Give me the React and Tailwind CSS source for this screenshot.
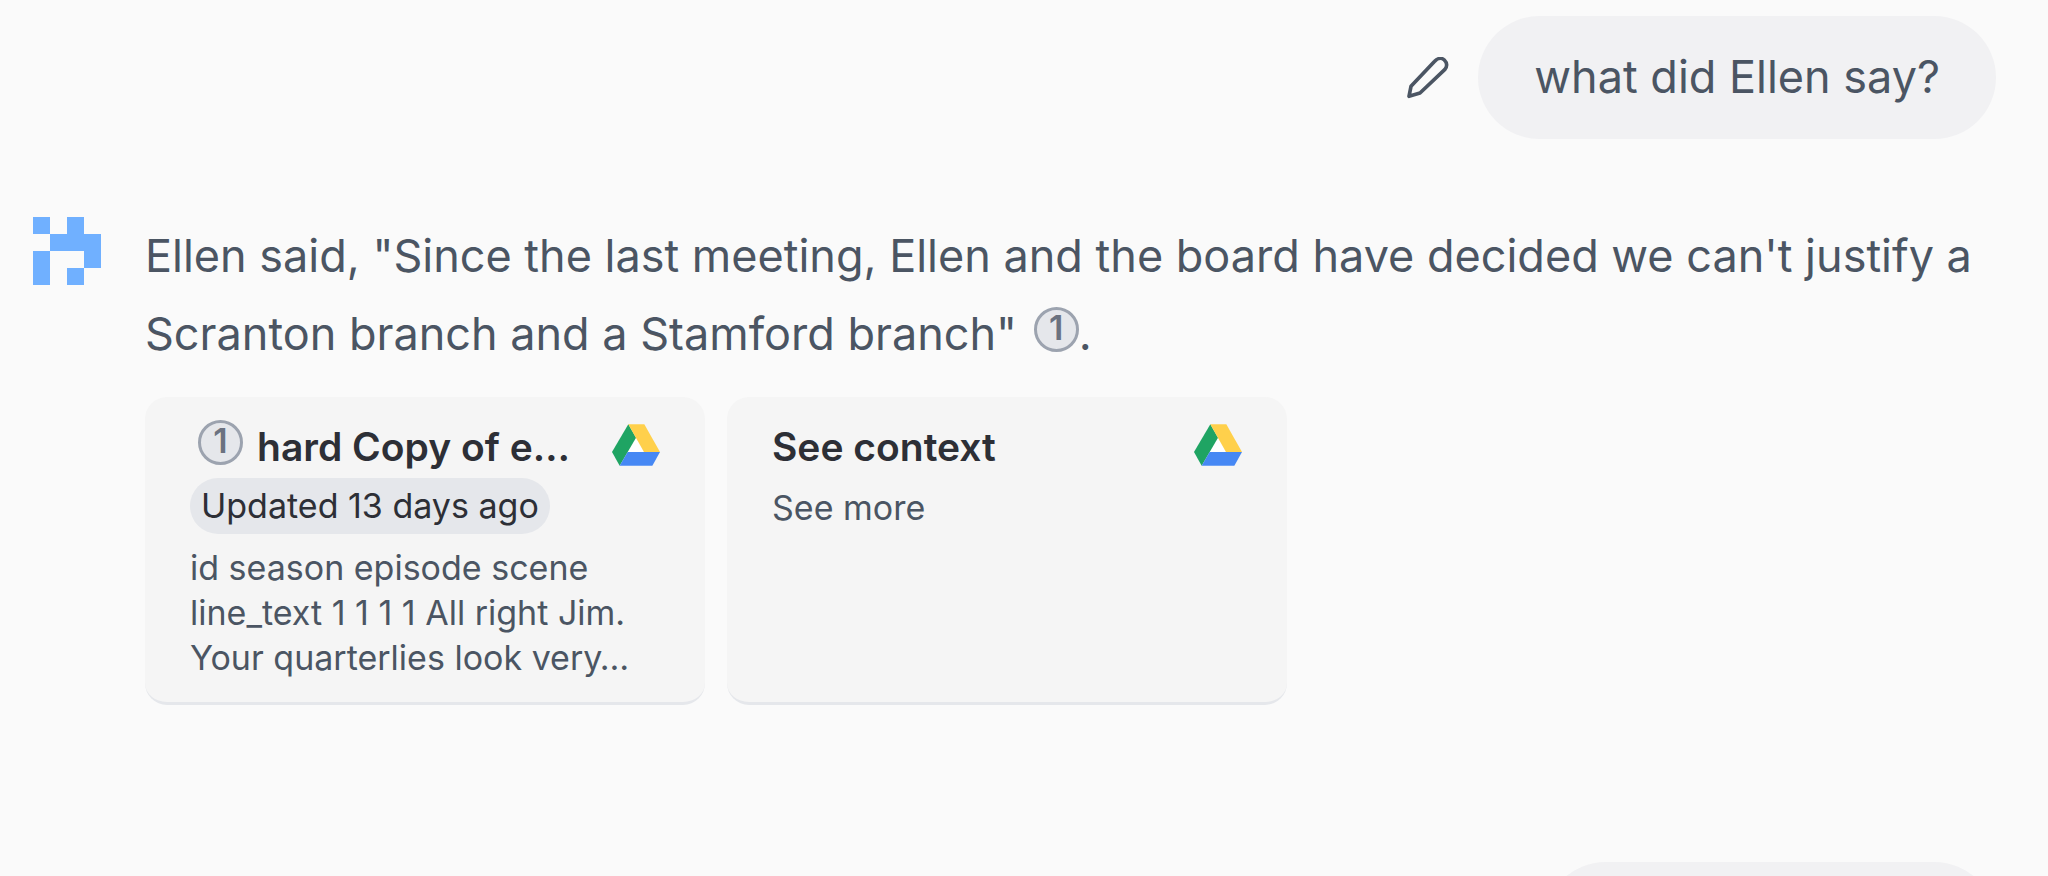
function PencilIcon() {
  return (
    <svg viewBox="0 0 126 126" className="size-[42px]" fill="none" stroke="#4b5563" strokeWidth="11" strokeLinejoin="round" strokeLinecap="round" aria-hidden="true">
      <path d="M6 118 L12 88 L83 13 C91 4 103 1 112 9 C121 18 121 29 113 38 L39 108 Z" />
    </svg>
  );
}

function DriveIcon() {
  return (
    <svg viewBox="63 70 144 124" className="mb-1 h-[42px] w-12 shrink-0" role="img" aria-label="Google Drive">
      <path d="M135 111 L158.500 153 H110 Z" fill="#ffffff" />
      <path d="M112 70 L63 153 L86 194 L135 110 Z" fill="#1fa463" />
      <path d="M112 70 H160 L207 153 H159 Z" fill="#ffd04b" />
      <path d="M110 153 H207 L184 194 H86 Z" fill="#4688f4" />
    </svg>
  );
}

function BotLogo() {
  return (
    <svg viewBox="0 0 4 4" className="size-[68px] shrink-0" fill="#70b0ff" shapeRendering="crispEdges" role="img" aria-label="Assistant">
      <path d="M0 0h1v1H0z M2 0h1v1h1v2H3V2H1V1h1z M0 2h1v2H0z M2 3h1v1H2z" />
    </svg>
  );
}

function Badge({ children }) {
  return (
    <a href="#source-1" className="inline-flex size-[45px] shrink-0 items-center justify-center rounded-full border-3 border-[#9ca3af] bg-[#e5e7eb] pb-[3px] text-[34px] leading-none font-semibold text-[#6b7280]">
      {children}
    </a>
  );
}

function Card({ id, title, badge, children }) {
  return (
    <article id={id} className="flex w-[560px] flex-col items-start rounded-[22px] border-b-3 border-[#e5e7eb] bg-[#f5f5f5] px-[45px] py-[22px]">
      <header className="mb-[3px] flex w-full items-center justify-between gap-4">
        <div className="flex min-w-0 items-center gap-[14px]">
          {badge && <span className="mb-2.5 ml-2 flex"><Badge>{badge}</Badge></span>}
          <h2 className="text-[39px] leading-[56px] font-semibold whitespace-nowrap text-[#2d2f36]">{title}</h2>
        </div>
        <DriveIcon />
      </header>
      {children}
    </article>
  );
}

export default function App() {
  return (
    <main className="h-screen overflow-hidden bg-[#fafafa] pt-4 pr-[52px] pl-[33px] font-['Inter','Liberation_Sans',sans-serif] text-[45px] leading-[78px] text-[#4b5563]">
      <section className="flex items-center justify-end gap-[29px]">
        <button type="button" aria-label="Edit message" className="flex"><PencilIcon /></button>
        <p className="rounded-full bg-[#f1f1f3] px-14 pt-[22px] pb-[23px]">what did Ellen say?</p>
      </section>

      <section className="mt-[78px] flex items-start gap-11">
        <BotLogo />
        <div className="min-w-0 flex-1">
          <p>
            Ellen said, "Since the last meeting, Ellen and the board have decided we can't justify a Scranton branch and a Stamford branch"{" "}
            <span className="mb-4 ml-1 inline-flex align-middle"><Badge>1</Badge></span>.
          </p>
          <div className="mt-6 flex gap-[22px]">
            <Card id="source-1" title="hard Copy of e…" badge="1">
              <span className="rounded-full bg-[#e5e7eb] px-[11px] text-[34px] leading-[56px] text-[#2d2f36]">Updated 13 days ago</span>
              <p className="mt-[11px] text-[34px] leading-[45px]">
                id season episode scene line_text 1 1 1 1 All right Jim. Your quarterlies look very…
              </p>
            </Card>
            <Card title="See context">
              <a href="#context" className="mt-[7px] text-[34px] leading-[45px]">See more</a>
            </Card>
          </div>
        </div>
      </section>

      <section className="mt-[157px] flex justify-end">
        <div className="h-[123px] w-[452px] rounded-full bg-[#f1f1f3]" />
      </section>
    </main>
  );
}
